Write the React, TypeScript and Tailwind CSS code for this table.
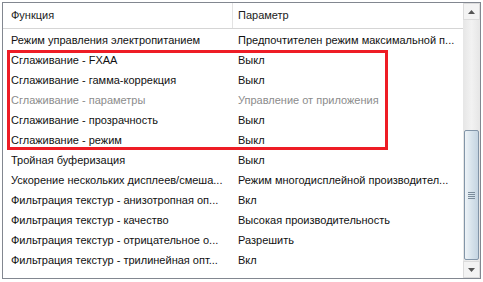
// Driver settings list: two-column list view with a Win7-style scrollbar
type Row = { name: string; value: string; muted?: boolean };

const before: Row[] = [
  { name: "Режим управления электропитанием", value: "Предпочтителен режим максимальной п..." },
];

const marked: Row[] = [
  { name: "Сглаживание - FXAA", value: "Выкл" },
  { name: "Сглаживание - гамма-коррекция", value: "Выкл" },
  { name: "Сглаживание - параметры", value: "Управление от приложения", muted: true },
  { name: "Сглаживание - прозрачность", value: "Выкл" },
  { name: "Сглаживание - режим", value: "Выкл" },
];

const after: Row[] = [
  { name: "Тройная буферизация", value: "Выкл" },
  { name: "Ускорение нескольких дисплеев/смеша...", value: "Режим многодисплейной производител..." },
  { name: "Фильтрация текстур - анизотропная оп...", value: "Вкл" },
  { name: "Фильтрация текстур - качество", value: "Высокая производительность" },
  { name: "Фильтрация текстур - отрицательное о...", value: "Разрешить" },
  { name: "Фильтрация текстур - трилинейная опт...", value: "Вкл" },
];

function ListRow({ row }: { row: Row }) {
  return (
    <div
      className={
        "flex h-[20px] items-center whitespace-nowrap " +
        (row.muted ? "text-[#8c8c8c]" : "text-[#111]")
      }
    >
      <div className="w-[230px] shrink-0 overflow-hidden pl-[8px]">{row.name}</div>
      <div className="min-w-0 flex-1 overflow-hidden pl-[5px]">{row.value}</div>
    </div>
  );
}

function ScrollBar() {
  return (
    <div className="flex w-[17px] shrink-0 flex-col bg-[#ececec]">
      <div className="flex h-[17px] items-center justify-center border border-[#dcdcdc] bg-[#f3f3f3]">
        <svg width="7" height="4" viewBox="0 0 7 4">
          <path d="M0 4 L3.5 0 L7 4 Z" fill="#555" />
        </svg>
      </div>
      <div className="flex flex-1 flex-col bg-gradient-to-r from-[#e6e6e6] via-[#f2f2f2] to-[#e6e6e6]">
        <div className="h-[110px] shrink-0" />
        <div className="mx-[1px] mb-[1px] flex flex-1 items-center justify-center rounded-[2px] border border-[#8295a8] bg-gradient-to-r from-[#eef3f7] via-[#d7e3ec] to-[#c4d4e1]">
          <div className="flex flex-col gap-[1px]">
            <div className="h-[1px] w-[7px] bg-[#7b8c9b]" />
            <div className="h-[1px] w-[7px] bg-[#7b8c9b]" />
            <div className="h-[1px] w-[7px] bg-[#7b8c9b]" />
            <div className="h-[1px] w-[7px] bg-[#7b8c9b]" />
          </div>
        </div>
      </div>
      <div className="flex h-[17px] items-center justify-center border border-[#dcdcdc] bg-[#f3f3f3]">
        <svg width="7" height="4" viewBox="0 0 7 4">
          <path d="M0 0 L7 0 L3.5 4 Z" fill="#555" />
        </svg>
      </div>
    </div>
  );
}

export default function App() {
  return (
    <div className="h-[282px] w-[483px] bg-white p-[2px] font-['Liberation_Sans','Noto_Sans',sans-serif] text-[11px] leading-none">
      <div className="flex h-[277px] w-[479px] border border-[#828790]">
        <div className="flex min-w-0 flex-1 flex-col">
          {/* column header */}
          <div className="flex h-[26px] shrink-0 items-center border-b border-[#d5d5d5] bg-white text-[#1c1c1c]">
            <div className="flex h-full w-[230px] shrink-0 items-center border-r border-[#e3e3e3] pl-[8px]">Функция</div>
            <div className="pl-[5px]">Параметр</div>
          </div>
          <div className="pt-[1px]">
            {before.map((r) => (
              <ListRow key={r.name} row={r} />
            ))}
            <div className="relative">
              {marked.map((r) => (
                <ListRow key={r.name} row={r} />
              ))}
              {/* red highlight frame */}
              <div className="absolute left-[4px] top-0 h-full w-[381px] border-[3px] border-[#ee1c25]" />
            </div>
            {after.map((r) => (
              <ListRow key={r.name} row={r} />
            ))}
          </div>
        </div>
        <ScrollBar />
      </div>
    </div>
  );
}
